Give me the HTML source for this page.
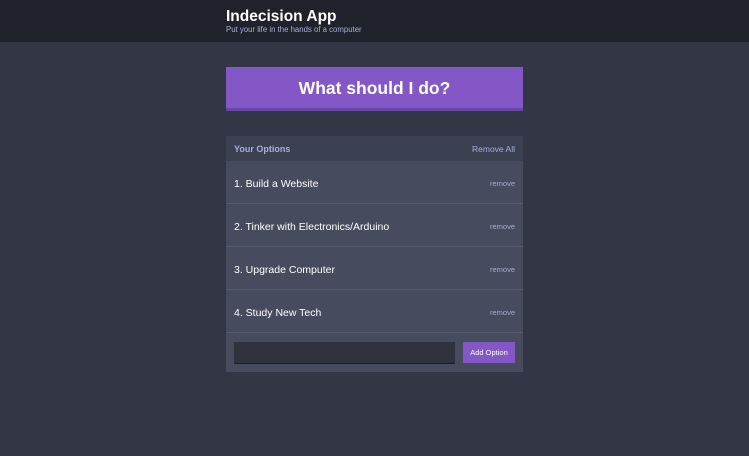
<!DOCTYPE html>
<html><head><style>
*{margin:0;padding:0;box-sizing:border-box}
body{width:749px;height:456px;background:#333645;font-family:"Liberation Sans",sans-serif;position:relative;overflow:hidden}
.hdr{position:absolute;left:0;top:0;width:749px;height:42px;background:#20222b}
.t{position:absolute;left:226px;top:8px;color:#fff;font-weight:bold;font-size:15.5px}
.st{position:absolute;left:226px;top:25px;color:#a5afd7;font-size:7.8px}
.big{position:absolute;left:226px;top:67px;width:297px;height:44px;background:#8357c5;border-bottom:3px solid #6b45a6;color:#fff;font-weight:bold;font-size:17.5px;text-align:center;line-height:42px}
.box{position:absolute;left:226px;top:136px;width:297px;height:236px;background:#464b5e}
.bh{height:25px;background:#3c4152;display:flex;justify-content:space-between;align-items:center;padding:0 8px;color:#a5afd7;font-size:8.5px}
.bh b{font-size:9px}
.it{height:43px;border-bottom:1px solid #555a6e;display:flex;justify-content:space-between;align-items:center;padding:3px 8px 0;color:#fff;font-size:10.5px}
.it span{color:#a5afd7;font-size:7.5px}
.in{position:absolute;left:8px;top:206px;width:221px;height:22px;background:#30323e;border-bottom:1px solid #1e1f26}
.ad{position:absolute;left:237px;top:206px;width:52px;height:21px;background:#8357c5;color:#fff;font-size:7.5px;text-align:center;line-height:21px}
</style></head><body>
<div class="hdr"></div>
<div class="t">Indecision App</div>
<div class="st">Put your life in the hands of a computer</div>
<div class="big">What should I do?</div>
<div class="box">
<div class="bh"><b>Your Options</b><span>Remove All</span></div>
<div class="it">1. Build a Website<span>remove</span></div>
<div class="it">2. Tinker with Electronics/Arduino<span>remove</span></div>
<div class="it">3. Upgrade Computer<span>remove</span></div>
<div class="it">4. Study New Tech<span>remove</span></div>
<div class="in"></div>
<div class="ad">Add Option</div>
</div>
</body></html>
